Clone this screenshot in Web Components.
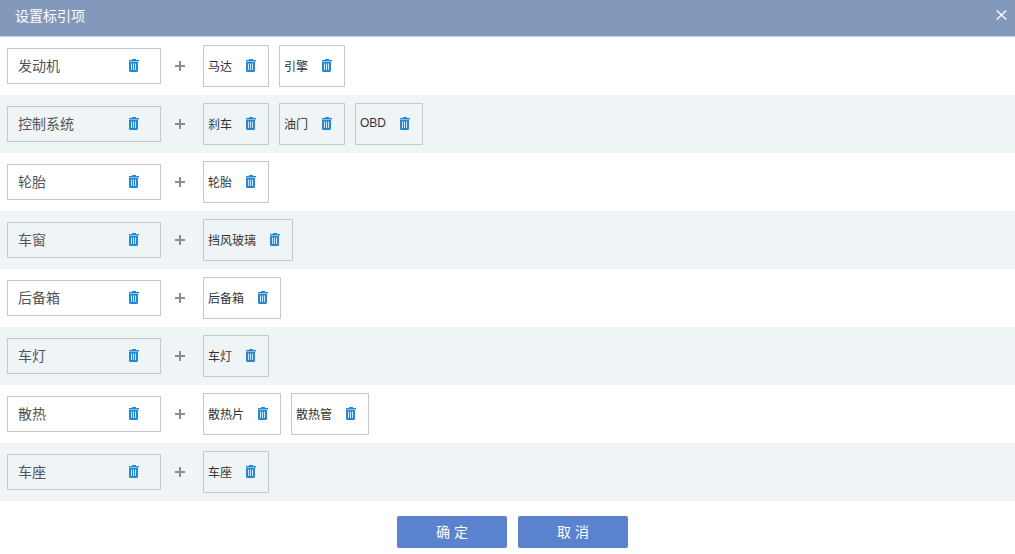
<!DOCTYPE html>
<html>
<head>
<meta charset="utf-8">
<title>设置标引项</title>
<style>
  html, body { margin: 0; padding: 0; background: #fff; }
  body { font-family: "Liberation Sans", "Noto Sans CJK SC", sans-serif; }
</style>
</head>
<body>
<index-dialog heading="设置标引项">
  <index-row name="发动机"><index-tag>马达</index-tag><index-tag>引擎</index-tag></index-row>
  <index-row name="控制系统"><index-tag>刹车</index-tag><index-tag>油门</index-tag><index-tag>OBD</index-tag></index-row>
  <index-row name="轮胎"><index-tag>轮胎</index-tag></index-row>
  <index-row name="车窗"><index-tag>挡风玻璃</index-tag></index-row>
  <index-row name="后备箱"><index-tag>后备箱</index-tag></index-row>
  <index-row name="车灯"><index-tag>车灯</index-tag></index-row>
  <index-row name="散热"><index-tag>散热片</index-tag><index-tag>散热管</index-tag></index-row>
  <index-row name="车座"><index-tag>车座</index-tag></index-row>
  <dlg-button slot="footer">确 定</dlg-button>
  <dlg-button slot="footer">取 消</dlg-button>
</index-dialog>

<script>
class TrashIcon extends HTMLElement {
  constructor() {
    super();
    this.attachShadow({ mode: 'open' }).innerHTML = `
      <style>
        :host { display: inline-flex; width: 10px; height: 13px; }
        svg { display: block; }
      </style>
      <svg width="10" height="13" viewBox="0 0 10 13">
        <path fill="#2389d7" d="M3 0h4v1h3v1.500H0V1h3z"/>
        <path fill="#2389d7" d="M0 3h9v8.800c0 .7-.5 1.200-1.200 1.200H1.200C.5 13 0 12.500 0 11.800z"/>
        <path fill="#cfe5f6" d="M2 4.500h1V11H2zM4 4.500h1V11H4zM6 4.500h1V11H6z"/>
      </svg>`;
  }
}
customElements.define('trash-icon', TrashIcon);

class IndexTag extends HTMLElement {
  constructor() {
    super();
    this.attachShadow({ mode: 'open' }).innerHTML = `
      <style>
        :host {
          display: flex;
          align-items: center;
          box-sizing: border-box;
          height: 42px;
          padding: 0 12px 0 4px;
          border: 1px solid #c8c8c8;
          font-size: 12px;
          color: #333;
        }
        trash-icon { margin-left: 14px; margin-bottom: 2px; }
        .label { margin-bottom: 2px; }
      </style>
      <span class="label"><slot></slot></span>
      <trash-icon></trash-icon>`;
  }
}
customElements.define('index-tag', IndexTag);

class IndexRow extends HTMLElement {
  constructor() {
    super();
    this.attachShadow({ mode: 'open' }).innerHTML = `
      <style>
        :host {
          display: flex;
          align-items: center;
          box-sizing: border-box;
          height: 58px;
          padding-left: 7px;
        }
        :host(:nth-of-type(even)) { background: #eff4f7; }
        .main {
          display: flex;
          align-items: center;
          justify-content: space-between;
          box-sizing: border-box;
          width: 154px;
          height: 36px;
          padding: 0 21px 0 10px;
          border: 1px solid #c8c8c8;
          font-size: 14px;
          color: #555;
        }
        .main span { margin-bottom: 3px; }
        .main trash-icon { margin-bottom: 2px; }
        .plus { width: 38px; height: 10px; display: flex; justify-content: center; margin-right: 4px; }
        .tags { display: flex; gap: 10px; }
      </style>
      <div class="main"><span></span><trash-icon></trash-icon></div>
      <div class="plus">
        <svg width="10" height="10" viewBox="0 0 10 10"><path fill="#8c8c8c" d="M4 0h2v4h4v2H6v4H4V6H0V4h4z"/></svg>
      </div>
      <div class="tags"><slot></slot></div>`;
    this.shadowRoot.querySelector('.main span').textContent = this.getAttribute('name');
  }
}
customElements.define('index-row', IndexRow);

class DlgButton extends HTMLElement {
  constructor() {
    super();
    this.attachShadow({ mode: 'open' }).innerHTML = `
      <style>
        :host {
          display: flex;
          align-items: center;
          justify-content: center;
          box-sizing: border-box;
          width: 110px;
          height: 32px;
          padding-bottom: 2px;
          background: #5b82cd;
          border-radius: 2px;
          color: #fff;
          font-size: 14px;
          cursor: pointer;
        }
      </style>
      <slot></slot>`;
  }
}
customElements.define('dlg-button', DlgButton);

class IndexDialog extends HTMLElement {
  constructor() {
    super();
    this.attachShadow({ mode: 'open' }).innerHTML = `
      <style>
        :host { display: block; width: 1015px; height: 554px; background: #fff; overflow: hidden; }
        header {
          display: flex;
          align-items: center;
          justify-content: space-between;
          box-sizing: border-box;
          height: 37px;
          padding: 0 8px 6px 15px;
          background: #8399bb;
          border-bottom: 1px solid #c9d2e0;
          color: #fff;
          font-size: 14px;
        }
        footer { display: flex; justify-content: center; gap: 11px; padding: 15px 0 0 10px; }
      </style>
      <header>
        <span id="t"></span>
        <svg width="11" height="10" viewBox="0 0 11 10"><path stroke="#fff" stroke-width="1.400" fill="none" d="M.7 .5l9.600 9M10.300 .5L.7 9.500"/></svg>
      </header>
      <section><slot></slot></section>
      <footer><slot name="footer"></slot></footer>`;
    this.shadowRoot.getElementById('t').textContent = this.getAttribute('heading');
  }
}
customElements.define('index-dialog', IndexDialog);
</script>
</body>
</html>
